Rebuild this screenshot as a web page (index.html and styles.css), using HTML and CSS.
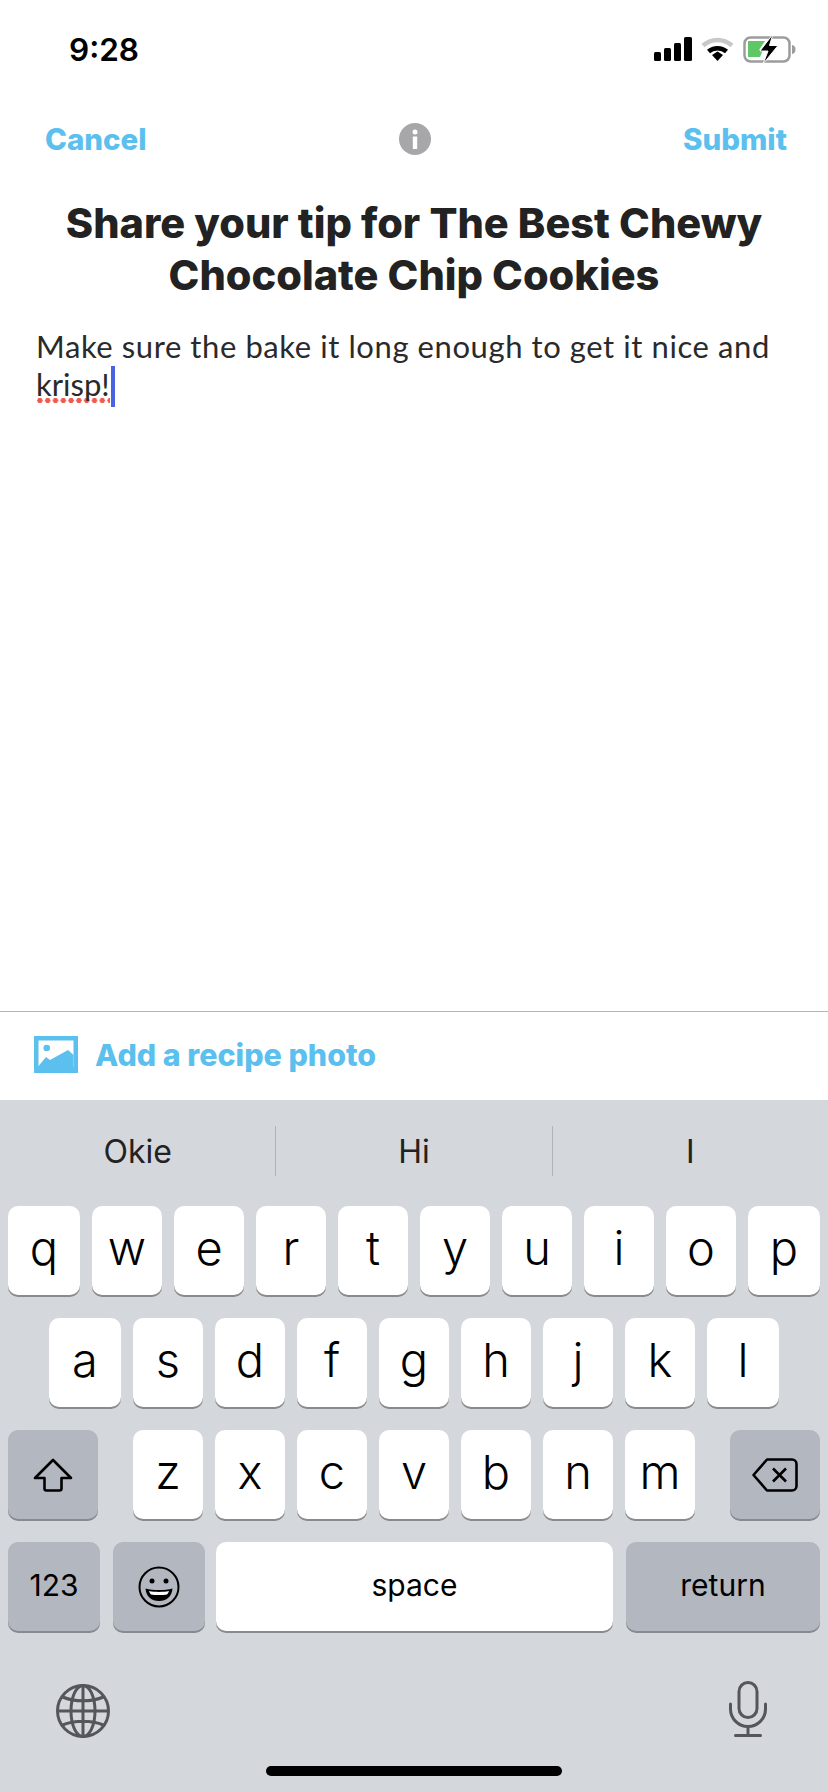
FILE: index.html
```html
<!DOCTYPE html>
<html lang="en">
<head>
  <meta charset="UTF-8" />
  <title>Share your tip</title>
  <meta name="viewport" content="width=device-width, initial-scale=1.0" />
  <link rel="stylesheet" href="styles.css">
</head>
<body>
  <div class="screen">
    <div class="status">
      <span class="time">9:28</span>
      <div class="status-icons">
        <svg class="signal" width="38" height="24" viewBox="0 0 38 24">
          <rect x="0" y="15" width="7" height="9" rx="1.5" fill="#000" />
          <rect x="10" y="11" width="7" height="13" rx="1.5" fill="#000" />
          <rect x="20" y="6" width="7" height="18" rx="1.5" fill="#000" />
          <rect x="30" y="0" width="8" height="24" rx="1.5" fill="#000" />
        </svg>
        <svg class="wifi" width="33" height="24" viewBox="0 0 33 24">
          <path d="M2 8.500C10.500 1 22.500 1 31 8.500" fill="none" stroke="#c8c8c8" stroke-width="4.500" />
          <path d="M7.500 14.500C12.500 10 20.500 10 25.500 14.500" fill="none" stroke="#000" stroke-width="4.500" />
          <path d="M11 18l5.500-3.500L22 18l-5.500 6z" fill="#000" />
        </svg>
        <svg class="battery" width="53" height="30" viewBox="0 0 53 30">
          <rect x="1.500" y="3.500" width="45" height="24" rx="6" fill="none" stroke="#9c9c9c" stroke-width="2.500" />
          <path d="M5 7h17l-6 9h4l-3 7H5z" fill="#5fc766" />
          <path d="M49 11c2.500 .5 3.500 2 3.500 4.500s-1 4-3.500 4.500z" fill="#9c9c9c" />
          <path d="M30 0L17 17h8L20 30l15-18.500h-8.500z" fill="#000" stroke="#fff" stroke-width="1" />
        </svg>
      </div>
    </div>

    <div class="nav">
      <span class="nav-link">Cancel</span>
      <svg class="info" width="32" height="32" viewBox="0 0 32 32">
        <circle cx="16" cy="16" r="16" fill="#a7a7a9" />
        <circle cx="16" cy="9" r="2.500" fill="#fff" />
        <rect x="13.800" y="13.500" width="4.400" height="12.500" fill="#fff" />
      </svg>
      <span class="nav-link">Submit</span>
    </div>

    <h1 class="title">Share your tip for The Best Chewy<br>Chocolate Chip Cookies</h1>

    <p class="tip">Make sure the bake it long enough to get it nice and <span class="misspelled">krisp!</span><span class="caret"></span></p>

    <div class="photo-bar">
      <svg width="44" height="37" viewBox="0 0 44 37">
        <rect width="44" height="37" fill="#5bc0ee" />
        <rect x="4.500" y="4.500" width="35" height="26" fill="#fff" />
        <circle cx="12.700" cy="12" r="3.300" fill="#5bc0ee" />
        <path d="M4.500 30L12 21l4 3 18-10 5.500 5v12h-35z" fill="#5bc0ee" />
      </svg>
      <span>Add a recipe photo</span>
    </div>

    <div class="keyboard">
      <div class="suggestions">
        <span class="suggestion">Okie</span>
        <span class="suggestion">Hi</span>
        <span class="suggestion">I</span>
      </div>

      <div class="row row-top">
        <div class="key key-edge">q</div><div class="key">w</div><div class="key">e</div><div class="key">r</div><div class="key">t</div>
        <div class="key">y</div><div class="key">u</div><div class="key">i</div><div class="key">o</div><div class="key key-edge">p</div>
      </div>
      <div class="row row-middle">
        <div class="key key-edge">a</div><div class="key">s</div><div class="key">d</div><div class="key">f</div><div class="key">g</div>
        <div class="key">h</div><div class="key">j</div><div class="key">k</div><div class="key key-edge">l</div>
      </div>
      <div class="row row-shift">
        <div class="key key-dark key-side">
          <svg width="40" height="34" viewBox="0 0 40 34">
            <path d="M20 2L2 20h9.500v10.500a2 2 0 0 0 2 2h13a2 2 0 0 0 2-2V20H38z" fill="none" stroke="#000" stroke-width="2.600" stroke-linejoin="round" />
          </svg>
        </div>
        <div class="letters">
          <div class="key">z</div><div class="key">x</div><div class="key">c</div><div class="key">v</div>
          <div class="key">b</div><div class="key">n</div><div class="key">m</div>
        </div>
        <div class="key key-dark key-side">
          <svg width="46" height="34" viewBox="0 0 46 34">
            <path d="M15 1.500h25a4.500 4.500 0 0 1 4.500 4.500v22a4.500 4.500 0 0 1-4.500 4.500H15L1.500 17z" fill="none" stroke="#000" stroke-width="2.600" stroke-linejoin="round" />
            <path d="M21 10.500l13 13M34 10.500l-13 13" fill="none" stroke="#000" stroke-width="2.600" />
          </svg>
        </div>
      </div>
      <div class="row row-bottom">
        <div class="key key-dark key-small key-func">123</div>
        <div class="key key-dark key-func">
          <svg width="42" height="42" viewBox="0 0 42 42">
            <circle cx="21" cy="21" r="19.500" fill="none" stroke="#000" stroke-width="2" />
            <circle cx="14" cy="15" r="2.500" fill="#000" />
            <circle cx="28" cy="15" r="2.500" fill="#000" />
            <path d="M7.500 22.500c8 2 19 2 27 0c-.5 8-6 12.500-13.500 12.500s-13-4.500-13.500-12.500z" fill="#000" />
            <path d="M11 25c6 1.200 14 1.200 20 0c-.5 1.500-1 2.500-2 3.500c-4 .8-12 .8-16 0c-1-1-1.500-2-2-3.500z" fill="#fff" />
          </svg>
        </div>
        <div class="key key-small key-space">space</div>
        <div class="key key-dark key-small key-return">return</div>
      </div>

      <div class="keyboard-bottom">
        <svg class="globe" width="54" height="54" viewBox="0 0 54 54" fill="none" stroke="#55565a" stroke-width="3">
          <circle cx="27" cy="27" r="25.500" />
          <ellipse cx="27" cy="27" rx="12" ry="25.500" />
          <path d="M27 2v50M2 27h50M6.500 13c12 5 29 5 41 0M6.500 41c12-5 29-5 41 0" />
        </svg>
        <svg width="38" height="56" viewBox="0 0 38 56" fill="none" stroke="#55565a" stroke-width="3" stroke-linecap="round">
          <rect x="10" y="1.500" width="18" height="35" rx="9" />
          <path d="M1.500 23v5a17.500 17.500 0 0 0 35 0v-5M19 45.500v9M6.500 54.500h25" />
        </svg>
      </div>
      <div class="home-indicator"></div>
    </div>
  </div>
</body>
</html>
```

FILE: styles.css
```css
body {
  margin: 0;
  background: #fff;
  color: #222;
  font-family: "Lato", sans-serif;
}

.screen {
  width: 828px;
  height: 1792px;
  display: flex;
  flex-direction: column;
  overflow: hidden;
}

.status {
  height: 98px;
  padding: 0 32px 0 69px;
  display: flex;
  align-items: center;
  justify-content: space-between;
  box-sizing: border-box;
}

.time {
  font-family: "Inter", sans-serif;
  font-size: 31.500px;
  font-weight: 600;
  color: #000;
}

.status-icons {
  display: flex;
  align-items: center;
  gap: 9px;
}

.nav {
  height: 82px;
  padding: 0 41px 0 45px;
  display: flex;
  align-items: center;
  justify-content: space-between;
}

.nav-link {
  font-family: "Inter", sans-serif;
  font-size: 29.500px;
  font-weight: 800;
  color: #5bc0ee;
}

.title {
  margin: 17px 0 0;
  font-family: "Inter", sans-serif;
  font-size: 41.500px;
  line-height: 52px;
  font-weight: 800;
  text-align: center;
  color: #222;
}

.tip {
  margin: 26px 0 0;
  padding: 0 36px;
  font-size: 31px;
  line-height: 38px;
  letter-spacing: 0.580px;
  color: #2a2a2a;
  flex: 1;
}

.misspelled {
  letter-spacing: 0;
  background: radial-gradient(circle, #f0594d 2.4px, transparent 2.8px) 0 100% / 7.800px 5px repeat-x;
}

.caret {
  display: inline-block;
  width: 4px;
  height: 41px;
  margin: -6px 0 -6px 1px;
  vertical-align: -5px;
  background: #4a63e0;
}

.photo-bar {
  height: 89px;
  padding: 0 0 3px 34px;
  border-top: 1px solid #b5b5b5;
  display: flex;
  align-items: center;
  gap: 17px;
  box-sizing: border-box;
  font-family: "Inter", sans-serif;
  font-size: 30.400px;
  font-weight: 800;
  color: #5bc0ee;
}

.keyboard {
  height: 692px;
  background: #d4d7dc;
  position: relative;
  font-family: "Inter", sans-serif;
  color: #000;
}

.suggestions {
  height: 106px;
  padding-bottom: 4px;
  box-sizing: border-box;
  display: flex;
  align-items: center;
}

.suggestion {
  flex: 1;
  height: 50px;
  display: flex;
  align-items: center;
  justify-content: center;
  font-size: 32px;
  color: #222;
}

.suggestion + .suggestion {
  border-left: 1px solid #b0b3b8;
}

.row {
  height: 91px;
  margin-bottom: 21px;
  display: flex;
  justify-content: space-between;
  padding: 0 8px;
}

.row-top {
  gap: 12px;
}

.row-middle {
  justify-content: center;
  gap: 12px;
}

.row-bottom {
  justify-content: flex-start;
  gap: 13px;
}

.letters {
  display: flex;
  gap: 12px;
}

.key {
  width: 70px;
  height: 89px;
  background: #fff;
  border-radius: 10px;
  box-shadow: 0 2px 0 #898a8d;
  display: flex;
  align-items: center;
  justify-content: center;
  font-size: 47px;
  font-weight: 300;
  padding-bottom: 6px;
  box-sizing: border-box;
}

.key-edge {
  width: 72px;
}

.key-dark {
  background: #b3b7c0;
  padding-bottom: 0;
}

.key-side {
  width: 90px;
}

.key-func {
  width: 92px;
}

.key-small {
  font-size: 30px;
  font-weight: 400;
  padding-bottom: 4px;
}

.key-space {
  width: 397px;
  margin-left: -2px;
}

.key-return {
  width: 194px;
}

.keyboard-bottom {
  padding: 27px 61px 0 56px;
  display: flex;
  justify-content: space-between;
  align-items: flex-start;
}

.globe {
  margin-top: 3px;
}

.home-indicator {
  position: absolute;
  left: 266px;
  bottom: 16px;
  width: 296px;
  height: 10px;
  border-radius: 5px;
  background: #000;
}
```
